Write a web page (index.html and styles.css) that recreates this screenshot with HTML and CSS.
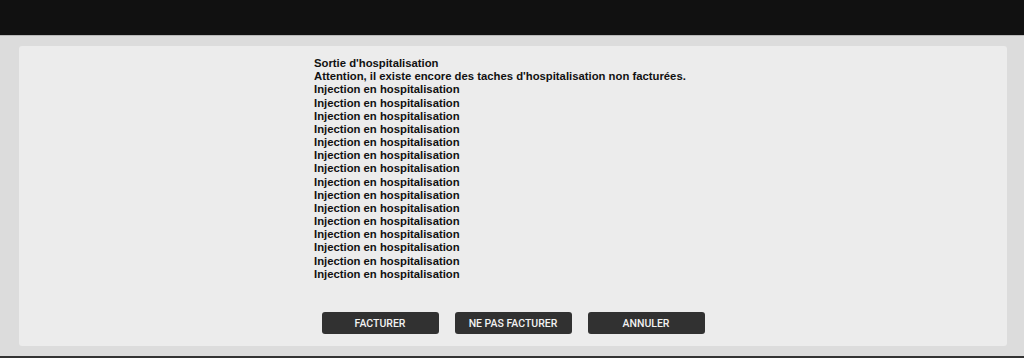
FILE: index.html
```html
<!DOCTYPE html>
<html lang="fr">
<head>
  <meta charset="UTF-8">
  <title>Sortie d'hospitalisation</title>
  <link rel="stylesheet" href="styles.css">
</head>
<body>

  <div class="topbar"></div>

  <div class="main">
    <div class="panel">
      <div class="message">
        <div>Sortie d'hospitalisation</div>
        <div>Attention, il existe encore des taches d'hospitalisation non facturées.</div>
        <div>Injection en hospitalisation</div>
        <div>Injection en hospitalisation</div>
        <div>Injection en hospitalisation</div>
        <div>Injection en hospitalisation</div>
        <div>Injection en hospitalisation</div>
        <div>Injection en hospitalisation</div>
        <div>Injection en hospitalisation</div>
        <div>Injection en hospitalisation</div>
        <div>Injection en hospitalisation</div>
        <div>Injection en hospitalisation</div>
        <div>Injection en hospitalisation</div>
        <div>Injection en hospitalisation</div>
        <div>Injection en hospitalisation</div>
        <div>Injection en hospitalisation</div>
        <div>Injection en hospitalisation</div>
      </div>

      <div class="actions">
        <button class="btn">Facturer</button>
        <button class="btn">Ne pas facturer</button>
        <button class="btn">Annuler</button>
      </div>
    </div>
  </div>

  <div class="bottombar"></div>

</body>
</html>
```

FILE: styles.css
```css
* {
  box-sizing: border-box;
}

body {
  margin: 0;
  padding: 0;
  height: 358px;
  background-color: #dcdcdc;
  font-family: 'Liberation Sans', Arial, sans-serif;
  display: flex;
  flex-direction: column;
  overflow: hidden;
}

.topbar {
  height: 36px;
  background-color: #111111;
  border-bottom: 1px solid #b8b8b8;
}

.main {
  padding: 10px 17px 10px 19px;
}

.panel {
  height: 300px;
  background-color: #ececec;
  border-radius: 3px;
  display: flex;
  flex-direction: column;
  align-items: center;
  padding: 11px 0 12px;
}

.message {
  width: 398px;
  font-size: 11.3px;
  font-weight: bold;
  line-height: 13.17px;
  color: #111;
}

.actions {
  margin-top: auto;
  display: flex;
  gap: 16px;
}

.btn {
  width: 117px;
  height: 22px;
  background-color: #313131;
  color: #f2f2f2;
  border: none;
  border-radius: 3px;
  font-family: Roboto, sans-serif;
  font-size: 10.5px;
  font-weight: 500;
  text-transform: uppercase;
  cursor: pointer;
}

.btn:hover {
  background-color: #444;
}

.bottombar {
  margin-top: auto;
  height: 2px;
  background-color: #333;
}
```
